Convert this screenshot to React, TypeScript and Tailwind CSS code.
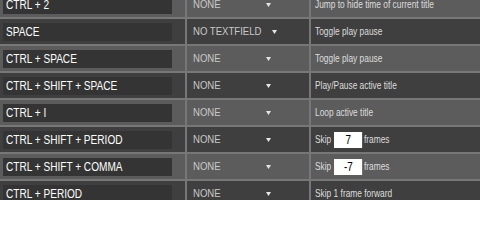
const rows: { keys: string; mode: string; action: string; skip?: string }[] = [
  { keys: "CTRL + 2", mode: "NONE", action: "Jump to hide time of current title" },
  { keys: "SPACE", mode: "NO TEXTFIELD", action: "Toggle play pause" },
  { keys: "CTRL + SPACE", mode: "NONE", action: "Toggle play pause" },
  { keys: "CTRL + SHIFT + SPACE", mode: "NONE", action: "Play/Pause active title" },
  { keys: "CTRL + I", mode: "NONE", action: "Loop active title" },
  { keys: "CTRL + SHIFT + PERIOD", mode: "NONE", action: "", skip: "7" },
  { keys: "CTRL + SHIFT + COMMA", mode: "NONE", action: "", skip: "-7" },
  { keys: "CTRL + PERIOD", mode: "NONE", action: "Skip 1 frame forward" },
];

const font = { fontFamily: '"Liberation Sans", Arial, sans-serif' };

const Caret = () => (
  <svg width="5" height="4" viewBox="0 0 5 4" className="shrink-0">
    <path d="M0 0h5L2.5 4z" fill="#e6e6e6" />
  </svg>
);

export default function App() {
  return (
    <div className="w-[480px] h-[200px] overflow-hidden bg-[#3f3f3f]" style={font}>
      <div className="-mt-[8px] grid grid-cols-[185px_122px_1fr] gap-[2px] bg-[#777777]">
        {rows.map((r, i) => {
          const bg = i % 2 === 0 ? "bg-[#5c5c5c]" : "bg-[#3f3f3f]";
          return [
            <div key={`k${i}`} className={`${bg} h-[25px] flex items-center pl-[3px]`}>
              <div className="w-[169px] h-[18px] bg-[#343434] flex items-center pl-[3px] text-white text-[12px]">
                <span className="inline-block origin-left scale-x-[0.84] whitespace-nowrap">{r.keys}</span>
              </div>
            </div>,
            <div key={`m${i}`} className={`${bg} h-[25px] flex items-center pl-[6px] pr-[38px] justify-between text-[#c9c9c9] text-[11px]`}>
              <span className="inline-block origin-left scale-x-[0.87] whitespace-nowrap">{r.mode}</span>
              <Caret />
            </div>,
            <div key={`a${i}`} className={`${bg} h-[25px] flex items-center pl-[4px] text-[#dddddd] text-[11px]`}>
              <div className="flex items-center origin-left scale-x-[0.76] whitespace-nowrap">
                {r.skip ? (
                  <>
                    <span>Skip</span>
                    <span className="ml-[4px] w-[37px] h-[16px] bg-white text-black text-[13px] flex items-center justify-center">
                      {r.skip}
                    </span>
                    <span className="ml-[2px]">frames</span>
                  </>
                ) : (
                  r.action
                )}
              </div>
            </div>,
          ];
        })}
      </div>
    </div>
  );
}
